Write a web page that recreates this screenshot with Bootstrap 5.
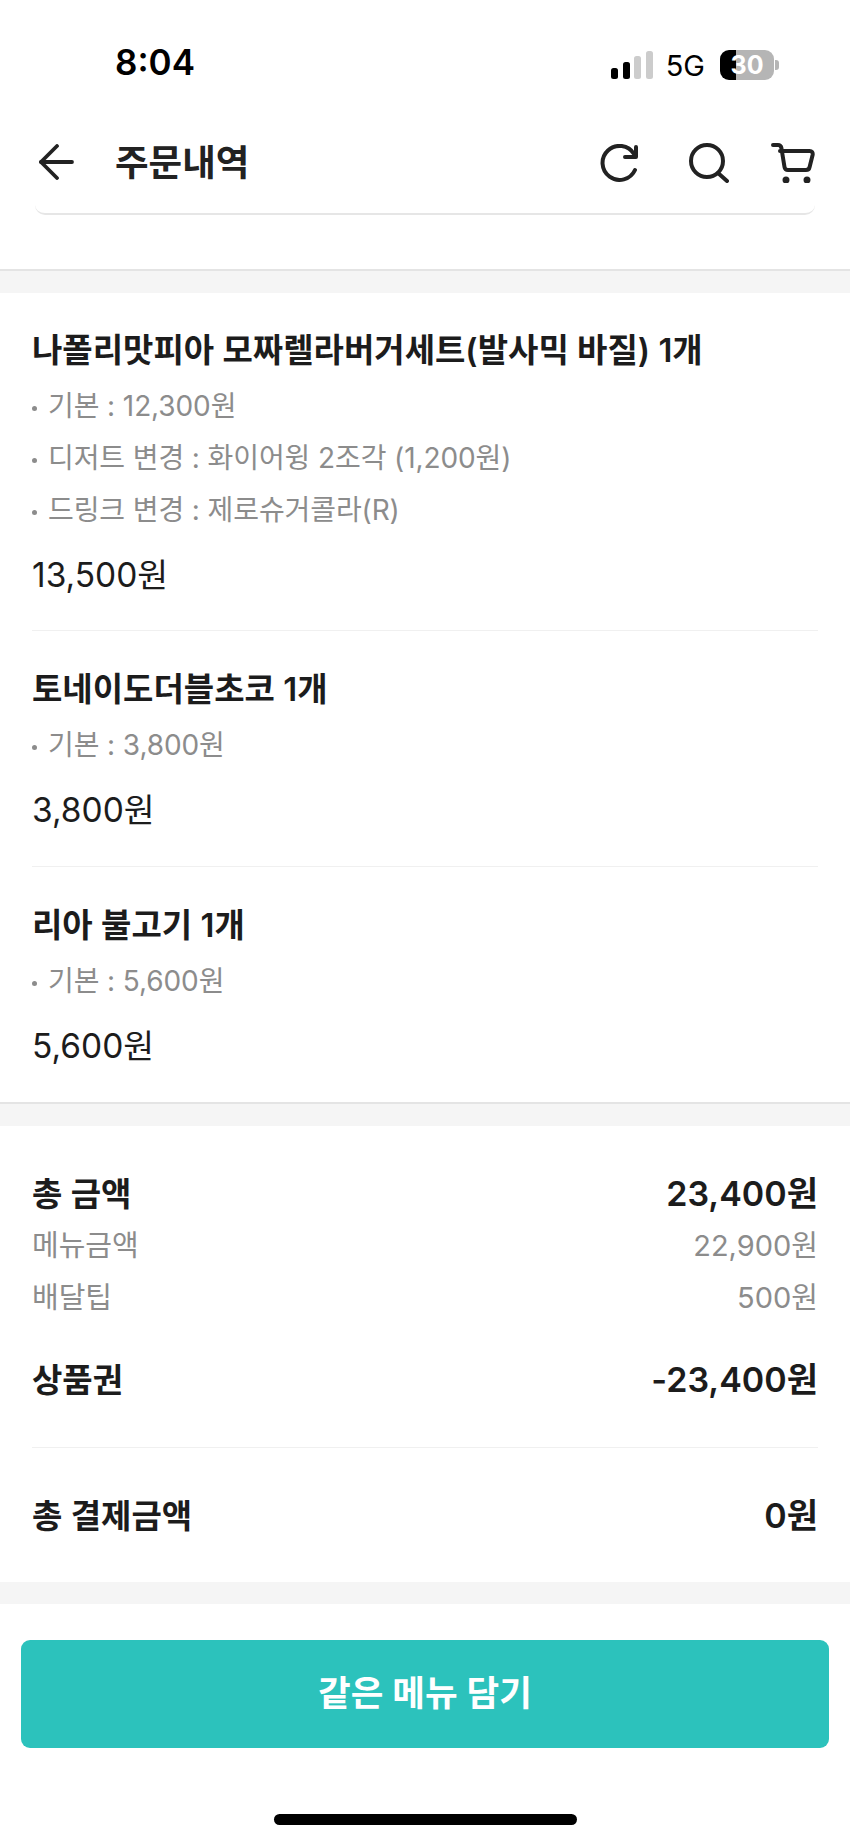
<!DOCTYPE html>
<html lang="ko">
<head>
    <meta charset="UTF-8">
    <meta name="viewport" content="width=device-width, initial-scale=1.0">
    <title>주문내역</title>
    <link href="https://cdn.jsdelivr.net/npm/bootstrap@5.3.0/dist/css/bootstrap.min.css" rel="stylesheet">
    <style>
        body { font-family: "Inter", "Noto Sans CJK KR", sans-serif; color: #1a1a1a; background: #fff; }
        .page-wrap { width: 850px; height: 1843px; overflow: hidden; }
        .status-bar { height: 96px; padding: 44px 71px 0 115px; }
        .status-time { font-size: 35px; line-height: 36px; font-weight: 600; color: #000; }
        .status-right { margin-top: 4px; }
        .status-net { font-size: 29px; line-height: 30px; color: #000; margin: 3px 15px 0 13px; }
        .battery-box { width: 54px; height: 30px; border-radius: 9px; background: linear-gradient(90deg, #000 30%, #b5b5b5 30%); color: #fff; font-size: 25px; line-height: 30px; font-weight: 700; text-align: center; }
        .battery-nub { width: 4px; height: 10px; background: #b5b5b5; border-radius: 0 3px 3px 0; margin-left: 1px; }
        .top-bar { height: 68px; padding: 0 35px 0 39px; margin-top: 32px; }
        .top-title { font-size: 36.5px; line-height: 40px; font-weight: 600; margin: 1px 0 0 41px; color: #222; }
        .top-icons { gap: 42px; margin-top: 1px; }
        .refresh-icon { margin-right: 6px; }
        .peek-card { height: 19px; margin: 0 35px 54px; border-bottom: 2px solid #e6e6e6; border-radius: 0 0 10px 10px; }
        .gray-band { height: 24px; background: #f5f5f5; border-top: 2px solid #e4e4e4; }
        .gray-band.no-line { border-top: 0; height: 22px; }
        .items-wrap { padding: 0 32px; }
        .order-item { border-bottom: 1px solid #f0f0f0; padding: 38px 0 36px; }
        .order-item:first-child { padding: 37px 0 35px; }
        .order-item:last-child { border-bottom: 0; padding-bottom: 36px; }
        .item-name { font-size: 33px; line-height: 40px; font-weight: 600; margin: 0 0 10px; color: #1c1c1c; }
        .opt-line { font-size: 28px; line-height: 52px; color: #8c8c8c; letter-spacing: -.1px; }
        .opt-line::before { content: ""; display: inline-block; width: 5px; height: 5px; border-radius: 50%; background: #8c8c8c; margin-right: 11px; vertical-align: 5px; }
        .item-price { font-size: 33.5px; line-height: 40px; color: #1c1c1c; margin-top: 19px; }
        .sum-wrap { padding-top: 48px; padding-bottom: 46px; }
        .sum-main { font-size: 33px; line-height: 40px; font-weight: 600; color: #1c1c1c; }
        .sum-main span:last-child { font-size: 34px; }
        .sum-sub { font-size: 29px; line-height: 52px; color: #8c8c8c; }
        .sum-first-sub { margin-top: 6px; }
        .sum-gift { margin-top: 36px; }
        .sum-rule { border-top: 1px solid #f0f0f0; margin-top: 47px; }
        .sum-final { margin-top: 48px; }
        .action-btn { display: block; width: 808px; height: 108px; margin: 36px 0 0 21px; border: 0; border-radius: 9px; background: #2cc2bc; color: #fff; font-size: 35.5px; font-weight: 600; }
        .action-btn:hover { background: #2cc2bc; color: #fff; }
        .home-bar { width: 303px; height: 11px; background: #000; border-radius: 6px; margin: 66px auto 0; }
    </style>
</head>
<body>
<div class="page-wrap">
    <div class="status-bar d-flex justify-content-between">
        <div class="status-time">8:04</div>
        <div class="status-right d-flex align-items-center align-self-start">
            <svg width="42" height="28" viewBox="0 0 42 28">
                <rect x="0" y="17" width="7" height="11" rx="2.5" fill="#000"/>
                <rect x="12" y="11" width="7" height="17" rx="2.5" fill="#000"/>
                <rect x="23" y="5" width="7" height="23" rx="2.5" fill="#ccc"/>
                <rect x="35" y="0" width="7" height="28" rx="2.5" fill="#ccc"/>
            </svg>
            <span class="status-net">5G</span>
            <div class="battery-box">30</div>
            <div class="battery-nub"></div>
        </div>
    </div>

    <div class="top-bar d-flex align-items-center justify-content-between">
        <div class="d-flex align-items-center">
            <svg width="35" height="36" viewBox="0 0 35 36" fill="none" stroke="#222" stroke-width="3.8" stroke-linecap="round" stroke-linejoin="round">
                <path d="M33 18H2"/><path d="M18 2L2 18l16 16"/>
            </svg>
            <div class="top-title">주문내역</div>
        </div>
        <div class="top-icons d-flex align-items-center">
            <svg class="refresh-icon" width="40" height="38" viewBox="0 0 40 38" fill="none" stroke="#222" stroke-width="4" stroke-linecap="round" stroke-linejoin="round">
                <path d="M35 26a17 17 0 1 1-1-16"/><path d="M36 3v10H25" />
            </svg>
            <svg width="41" height="41" viewBox="0 0 41 41" fill="none" stroke="#222" stroke-width="4" stroke-linecap="round">
                <circle cx="19" cy="19" r="16"/><path d="M30 31l9 8"/>
            </svg>
            <svg width="44" height="40" viewBox="0 0 44 40" fill="none" stroke="#222" stroke-width="4" stroke-linecap="round" stroke-linejoin="round">
                <path d="M2 2h5c2 0 3 1 3.400 3l3.100 19c.3 2 1.500 3 3.500 3h18c2 0 3.200-1 3.600-3l3-12c.5-2.500-.8-4-3-4H9"/>
                <circle cx="15" cy="37" r="1.500" fill="#222"/><circle cx="36" cy="37" r="1.500" fill="#222"/>
            </svg>
        </div>
    </div>

    <div class="peek-card"></div>
    <div class="gray-band"></div>

    <div class="items-wrap">
        <div class="order-item">
            <p class="item-name">나폴리맛피아 모짜렐라버거세트(발사믹 바질) 1개</p>
            <div class="opt-line">기본 : 12,300원</div>
            <div class="opt-line">디저트 변경 : 화이어윙 2조각 (1,200원)</div>
            <div class="opt-line">드링크 변경 : 제로슈거콜라(R)</div>
            <div class="item-price">13,500원</div>
        </div>
        <div class="order-item">
            <p class="item-name">토네이도더블초코 1개</p>
            <div class="opt-line">기본 : 3,800원</div>
            <div class="item-price">3,800원</div>
        </div>
        <div class="order-item">
            <p class="item-name">리아 불고기 1개</p>
            <div class="opt-line">기본 : 5,600원</div>
            <div class="item-price">5,600원</div>
        </div>
    </div>

    <div class="gray-band"></div>

    <div class="items-wrap sum-wrap">
        <div class="d-flex justify-content-between sum-main">
            <span>총 금액</span><span>23,400원</span>
        </div>
        <div class="d-flex justify-content-between sum-sub sum-first-sub">
            <span>메뉴금액</span><span>22,900원</span>
        </div>
        <div class="d-flex justify-content-between sum-sub">
            <span>배달팁</span><span>500원</span>
        </div>
        <div class="d-flex justify-content-between sum-main sum-gift">
            <span>상품권</span><span>-23,400원</span>
        </div>
        <div class="sum-rule"></div>
        <div class="d-flex justify-content-between sum-main sum-final">
            <span>총 결제금액</span><span>0원</span>
        </div>
    </div>

    <div class="gray-band no-line"></div>

    <button type="button" class="btn action-btn">같은 메뉴 담기</button>
    <div class="home-bar"></div>
</div>
</body>
</html>
